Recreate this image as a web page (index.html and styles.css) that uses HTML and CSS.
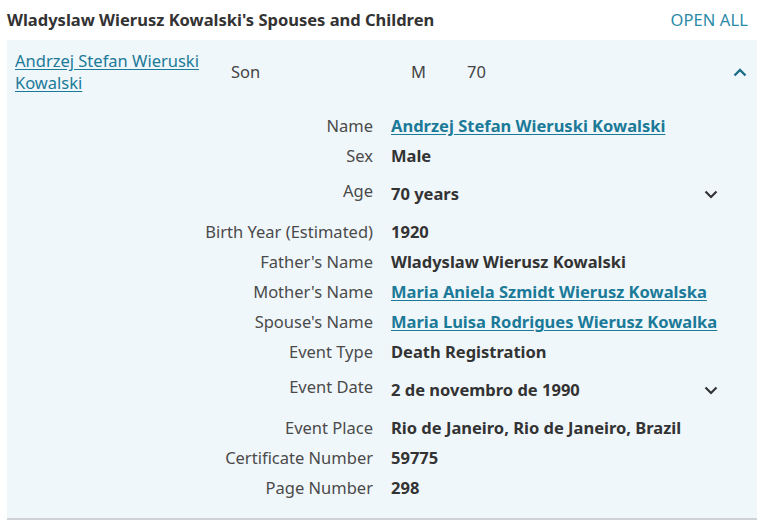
FILE: index.html
```html
<!DOCTYPE html>
<html>
<head>
<meta charset="utf-8">
<link rel="stylesheet" href="styles.css">
</head>
<body>
<div class="wrap">
  <div class="head">
    <h2 class="title">Wladyslaw Wierusz Kowalski's Spouses and Children</h2>
    <a class="open-all" href="#">OPEN ALL</a>
  </div>
  <div class="panel">
    <div class="summary">
      <a class="link sum-name" href="#">Andrzej Stefan Wieruski Kowalski</a>
      <span class="sum-rel">Son</span>
      <span class="sum-sex">M</span>
      <span class="sum-age">70</span>
      <svg class="chev-up" width="14" height="9" viewBox="0 0 14 9"><path d="M1.5 7.5 L7 2 L12.5 7.5" fill="none" stroke="#1d6e88" stroke-width="2.4"/></svg>
    </div>
    <div class="details">
      <div class="row"><div class="lbl">Name</div><div class="val"><a class="link" href="#">Andrzej Stefan Wieruski Kowalski</a></div></div>
      <div class="row"><div class="lbl">Sex</div><div class="val">Male</div></div>
      <div class="row tall"><div class="lbl">Age</div><div class="val"><span>70 years</span><svg class="chev" width="14" height="9" viewBox="0 0 14 9"><path d="M1.5 1.5 L7 7 L12.5 1.5" fill="none" stroke="#333" stroke-width="2.2"/></svg></div></div>
      <div class="row"><div class="lbl">Birth Year (Estimated)</div><div class="val">1920</div></div>
      <div class="row"><div class="lbl">Father's Name</div><div class="val">Wladyslaw Wierusz Kowalski</div></div>
      <div class="row"><div class="lbl">Mother's Name</div><div class="val"><a class="link" href="#">Maria Aniela Szmidt Wierusz Kowalska</a></div></div>
      <div class="row"><div class="lbl">Spouse's Name</div><div class="val"><a class="link" href="#">Maria Luisa Rodrigues Wierusz Kowalka</a></div></div>
      <div class="row"><div class="lbl">Event Type</div><div class="val">Death Registration</div></div>
      <div class="row tall"><div class="lbl">Event Date</div><div class="val"><span>2 de novembro de 1990</span><svg class="chev" width="14" height="9" viewBox="0 0 14 9"><path d="M1.5 1.5 L7 7 L12.5 1.5" fill="none" stroke="#333" stroke-width="2.2"/></svg></div></div>
      <div class="row"><div class="lbl">Event Place</div><div class="val">Rio de Janeiro, Rio de Janeiro, Brazil</div></div>
      <div class="row"><div class="lbl">Certificate Number</div><div class="val">59775</div></div>
      <div class="row"><div class="lbl">Page Number</div><div class="val">298</div></div>
    </div>
  </div>
</div>
</body>
</html>
```
FILE: styles.css
```css
* { box-sizing: border-box; }
body {
  margin: 0;
  font-family: "Noto Sans", "Open Sans", sans-serif;
  font-size: 16.5px;
  color: #333;
  background: #fff;
}
.wrap { padding: 0 11px 0 7px; }
.head {
  display: flex;
  justify-content: space-between;
  align-items: center;
  height: 40px;
  padding-right: 9px;
  padding-bottom: 2px;
}
.title {
  margin: 0;
  font-size: 16.5px;
  font-weight: 700;
  color: #333;
}
.open-all {
  color: #2b8aa8;
  text-decoration: none;
  font-size: 16.5px;
  letter-spacing: 0.1px;
}
.panel {
  background: #f0f7fb;
  border-bottom: 2px solid #cfd3d5;
  height: 480px;
}
.link {
  color: #1b7a98;
  text-decoration: underline;
  text-underline-offset: 2px;
}
.summary {
  display: flex;
  padding: 10px 10px 0 8px;
  height: 71px;
  align-items: flex-start;
}
.sum-name {
  width: 200px;
  line-height: 22px;
}
.sum-rel { margin-left: 16px; width: 180px; line-height: 22px; padding-top: 11px; color: #444; }
.sum-sex { width: 56px; line-height: 22px; padding-top: 11px; color: #444; }
.sum-age { line-height: 22px; padding-top: 11px; color: #444; flex: 1; }
.chev-up { margin-top: 18px; }
.row {
  display: grid;
  grid-template-columns: 366px 1fr;
  column-gap: 18px;
  padding: 4px 0;
  width: 711px;
}
.lbl {
  text-align: right;
  color: #4a4a4a;
  line-height: 22px;
}
.val {
  font-weight: 700;
  line-height: 22px;
  color: #333;
}
.row.tall .lbl { padding-top: 5px; }
.row.tall .val {
  display: flex;
  justify-content: space-between;
  align-items: center;
  padding: 8px 0 8px;
}
```
